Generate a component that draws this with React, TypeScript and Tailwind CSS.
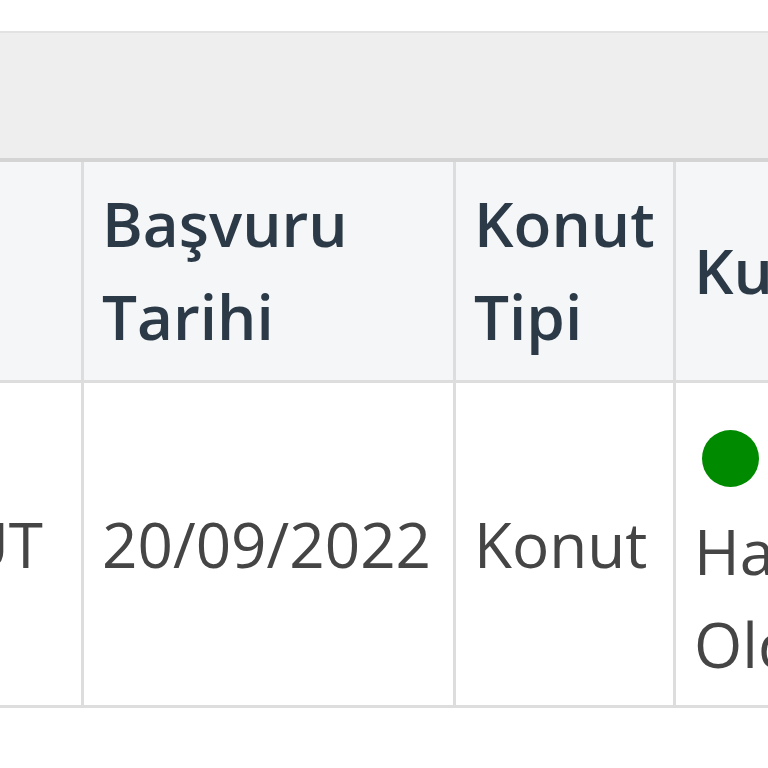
const font = { fontFamily: "'Open Sans', 'Noto Sans', sans-serif" };

const cell = "border-[3px] border-[#dddddd] px-[18px] align-middle";

export default function App() {
  return (
    <div className="min-h-[768px] w-[768px] overflow-hidden bg-white" style={font}>
      <div className="h-[31px]" />
      <div className="h-[131px] border-t-[2px] border-b-[4px] border-t-[#e2e2e2] border-b-[#d4d4d4] bg-[#eeeeee]" />
      <div className="overflow-hidden">
        <table className="-ml-[319px] -mt-[2px] w-[1452px] min-w-[1452px] table-fixed border-collapse text-[62px] leading-[93px]">
          <colgroup>
            <col className="w-[400px]" />
            <col className="w-[372px]" />
            <col className="w-[220px]" />
            <col className="w-[460px]" />
          </colgroup>
          <thead>
            <tr className="bg-[#f5f6f7] text-[#2c3a48]">
              <th className={`${cell} border-t-0 py-[17px] text-left font-semibold`}>Proje</th>
              <th className={`${cell} border-t-0 py-[17px] text-left font-semibold`}>
                Başvuru Tarihi
              </th>
              <th className={`${cell} border-t-0 py-[17px] text-left font-semibold`}>Konut Tipi</th>
              <th className={`${cell} border-t-0 py-[17px] text-left font-semibold`}>Kura</th>
            </tr>
          </thead>
          <tbody>
            <tr className="bg-white text-[#454545]">
              <td className={`${cell} pr-[38px] text-right`}>KONUT</td>
              <td className={cell}>20/09/2022</td>
              <td className={cell}>Konut</td>
              <td className={`${cell} pt-[28px] pb-[14px]`}>
                <div className="flex h-[94px] items-center">
                  <span className="ml-[8px] inline-block h-[57px] w-[57px] rounded-full bg-[#008a00]" />
                </div>
                <div>Hak Sahibi Oldu</div>
              </td>
            </tr>
          </tbody>
        </table>
      </div>
    </div>
  );
}
